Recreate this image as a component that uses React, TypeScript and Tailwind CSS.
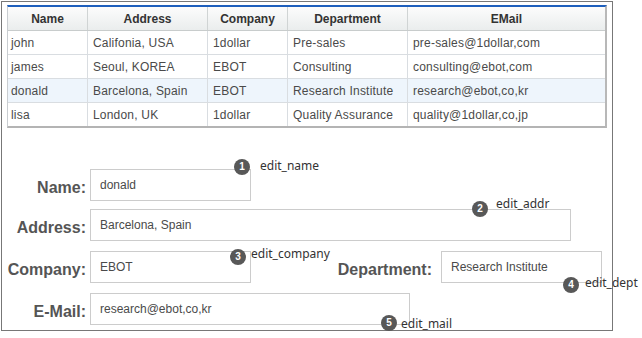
import React from 'react';

type Person = { name: string; address: string; company: string; dept: string; email: string };

const people: Person[] = [
  { name: 'john', address: 'Califonia, USA', company: '1dollar', dept: 'Pre-sales', email: 'pre-sales@1dollar,com' },
  { name: 'james', address: 'Seoul, KOREA', company: 'EBOT', dept: 'Consulting', email: 'consulting@ebot,com' },
  { name: 'donald', address: 'Barcelona, Spain', company: 'EBOT', dept: 'Research Institute', email: 'research@ebot,co,kr' },
  { name: 'lisa', address: 'London, UK', company: '1dollar', dept: 'Quality Assurance', email: 'quality@1dollar,co,jp' },
];

const selected = 2;

function Badge({ n, className }: { n: number; className: string }) {
  return (
    <span
      className={`absolute w-4 h-4 rounded-full bg-[#585858] text-white text-[10px] font-bold leading-none flex items-center justify-center ${className}`}
    >
      {n}
    </span>
  );
}

function Note({ text, className }: { text: string; className: string }) {
  return (
    <span className={`absolute whitespace-nowrap text-[12px] leading-4 text-[#333] font-['Noto_Sans',sans-serif] ${className}`}>
      {text}
    </span>
  );
}

function Field({ value, width, children }: { value: string; width: string; children?: React.ReactNode }) {
  return (
    <div className={`relative h-[32px] ${width}`}>
      <input
        readOnly
        value={value}
        className="w-full h-full border border-[#cccccc] bg-white px-[9px] text-[12px] text-[#4a4a4a] outline-none"
      />
      {children}
    </div>
  );
}

function Label({ text, className = 'w-[84px]' }: { text: string; className?: string }) {
  return <div className={`${className} pt-[7px] text-right text-[16px] font-bold text-[#555]`}>{text}</div>;
}

export default function App() {
  const cell = 'h-[23px] flex items-center pl-[5px] whitespace-nowrap';
  return (
    <div className="w-[642px] h-[338px] bg-white pt-px pl-px font-['Liberation_Sans',Arial,sans-serif]">
      <div className="w-[612px] h-[330px] border border-[#777]">
        {/* grid */}
        <div className="mt-[3px] ml-[5px] w-[600px] border-t-2 border-t-[#1e5fbd] border-l border-l-[#c9cdd1] border-r-2 border-r-[#b8b8b8] border-b-2 border-b-[#b4b4b4]">
          <div className="grid grid-cols-[80px_120px_80px_120px_1fr] bg-linear-to-b from-[#fcfcfc] to-[#eaeded] border-b border-[#c8cccc] text-[12px] font-bold text-[#333]">
            {['Name', 'Address', 'Company', 'Department', 'EMail'].map((h, i) => (
              <div
                key={h}
                className={`h-[23px] flex items-center justify-center ${i < 4 ? 'border-r border-[#d0d4d4]' : ''}`}
              >
                {h}
              </div>
            ))}
          </div>
          {people.map((p, r) => (
            <div
              key={p.name}
              className={`grid grid-cols-[80px_120px_80px_120px_1fr] text-[12px] text-[#4a4a4a] tracking-[0.2px] ${
                r === selected ? 'bg-[#eef5fc]' : 'bg-white'
              } ${r < people.length - 1 ? 'border-b border-[#d9dde1]' : ''}`}
            >
              <div className={`${cell} !pl-[3px] border-r border-[#d9dde1]`}>{p.name}</div>
              <div className={`${cell} border-r border-[#d9dde1]`}>{p.address}</div>
              <div className={`${cell} border-r border-[#d9dde1]`}>{p.company}</div>
              <div className={`${cell} border-r border-[#d9dde1]`}>{p.dept}</div>
              <div className={cell}>{p.email}</div>
            </div>
          ))}
        </div>

        {/* edit form */}
        <div className="mt-[41px]">
          <div className="flex gap-[4px]">
            <Label text="Name:" />
            <Field value="donald" width="w-[161px]">
              <Badge n={1} className="left-[144px] -top-[10px]" />
              <Note text="edit_name" className="left-[170px] -top-[11px]" />
            </Field>
          </div>
          <div className="flex gap-[4px] mt-[8px]">
            <Label text="Address:" />
            <Field value="Barcelona, Spain" width="w-[481px]">
              <Badge n={2} className="left-[382px] -top-[8px]" />
              <Note text="edit_addr" className="left-[406px] -top-[13px]" />
            </Field>
          </div>
          <div className="flex gap-[4px] mt-[10px]">
            <Label text="Company:" />
            <Field value="EBOT" width="w-[161px]">
              <Badge n={3} className="left-[140px] -top-[2px]" />
              <Note text="edit_company" className="left-[161px] -top-[5px]" />
            </Field>
            <Label text="Department:" className="w-[177px]" />
            <div className="ml-[5px]">
              <Field value="Research Institute" width="w-[161px]">
                <Badge n={4} className="left-[122px] top-[26px]" />
                <Note text="edit_dept" className="left-[144px] top-[24px]" />
              </Field>
            </div>
          </div>
          <div className="flex gap-[4px] mt-[10px]">
            <Label text="E-Mail:" />
            <Field value="research@ebot,co,kr" width="w-[320px]">
              <Badge n={5} className="left-[291px] top-[22px]" />
              <Note text="edit_mail" className="left-[311px] top-[23px]" />
            </Field>
          </div>
        </div>
      </div>
    </div>
  );
}
